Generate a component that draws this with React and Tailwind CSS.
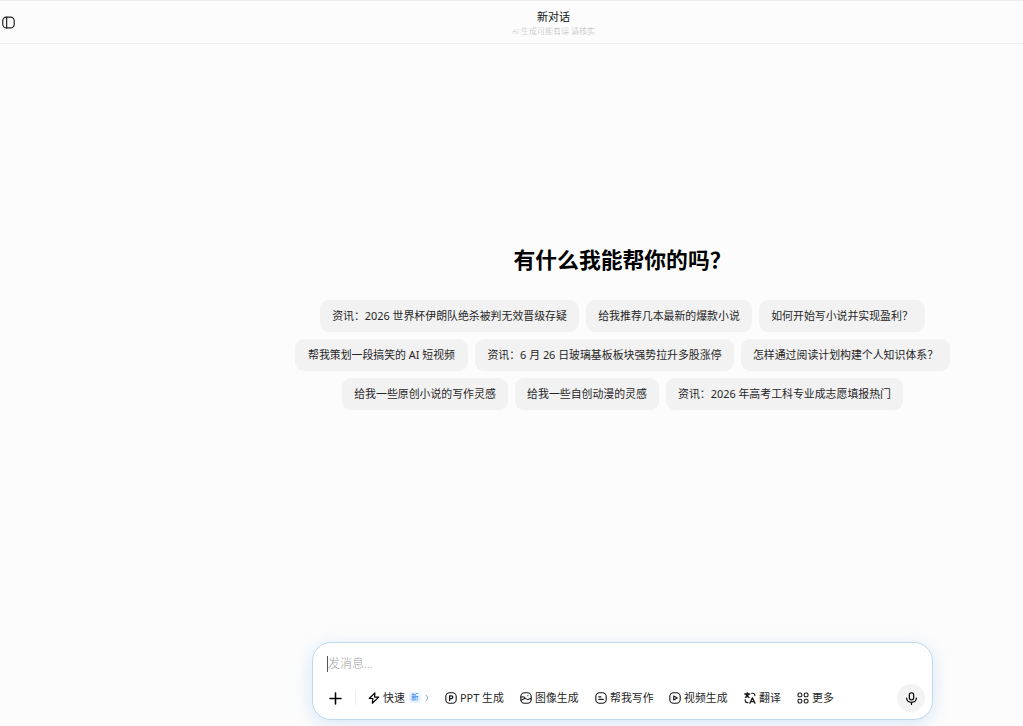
const rows = [
  [
    ['资讯：2026 世界杯伊朗队绝杀被判无效晋级存疑', 'w-[259px]'],
    ['给我推荐几本最新的爆款小说', 'w-[166px]'],
    ['如何开始写小说并实现盈利？', 'w-[166px]'],
  ],
  [
    ['帮我策划一段搞笑的 AI 短视频', 'w-[173px]'],
    ['资讯：6 月 26 日玻璃基板板块强势拉升多股涨停', 'w-[259px]'],
    ['怎样通过阅读计划构建个人知识体系？', 'w-[209px]'],
  ],
  [
    ['给我一些原创小说的写作灵感', 'w-[166px]'],
    ['给我一些自创动漫的灵感', 'w-[144px]'],
    ['资讯：2026 年高考工科专业成志愿填报热门', 'w-[237px]'],
  ],
];

function Icon({ children, className = 'size-3', stroke = 1.1 }) {
  return (
    <svg viewBox="0 0 12 12" className={`shrink-0 ${className}`} fill="none" stroke="currentColor" strokeWidth={stroke} strokeLinecap="round" strokeLinejoin="round">
      {children}
    </svg>
  );
}

const Frame = () => <rect x="0.8" y="0.8" width="10.4" height="10.4" rx="3.8" />;

const tools = [
  ['PPT 生成', 'w-[75px]', <><Frame /><path d="M4.6 8.4V3.9h1.8a1.35 1.35 0 0 1 0 2.7H4.6" strokeWidth="1.3" /></>],
  ['图像生成', 'w-[75px]', <><Frame /><path d="M1 5.2c1.6-.9 2.9-.6 4.2.8 1.1 1.2 2 1.8 3 1.5 1-.3 1.5-.9 2.8-.9M1.2 8.2l3.8-2M7.7 3.7h.3" /></>],
  ['帮我写作', 'w-[74px]', <><Frame /><path d="M3.8 4.9h2.1M3.8 7.4h4.4" /></>],
  ['视频生成', 'w-[75px]', <><Frame /><path d="M4.7 4v4l3.5-2z" /></>],
  ['翻译', 'w-[53px]', <><path d="M.8 2h5M3.3.7V2M1.3 5.4C3 4.8 4.2 3.6 4.6 2M1.8 2.3c.5 1.4 1.7 2.4 3.3 3M5.9 11.2l2.5-5.4 2.6 5.4M6.8 9.6h3.2" strokeWidth="1.3" /><path d="M7.7 1.2h1.1a2 2 0 0 1 2 2v.5M1.2 7.5v1.1a2 2 0 0 0 2 2h.8" /></>],
  ['更多', 'w-10', <><rect x="1" y="1" width="3.8" height="3.8" rx="1.4" /><rect x="7.2" y="1" width="3.8" height="3.8" rx="1.4" /><rect x="1" y="7.2" width="3.8" height="3.8" rx="1.4" /><rect x="7.2" y="7.2" width="3.8" height="3.8" rx="1.4" /></>],
];

export default function App() {
  return (
    <div className="flex h-[726px] w-[1023px] flex-col overflow-hidden bg-[#fcfcfc] font-['Noto_Sans','Noto_Sans_CJK_SC',sans-serif] text-[10.9px] text-[#262626]">
      <header className="flex h-11 shrink-0 items-center border-t border-b border-[#eeeeee]">
        <Icon className="ml-0.5 size-[13px] text-[#222]">
          <rect x="0.7" y="1" width="10.6" height="10" rx="3.4" />
          <path d="M4.3 1v10" />
        </Icon>
        <div className="ml-[69px] flex w-[939px] flex-col items-center pt-px">
          <h1 className="text-[11px] leading-[15px] text-[#111]">新对话</h1>
          <p className="text-[8px] leading-[13px] font-light text-[#b8b8b8]">
            <span className="font-['Open_Sans']">AI</span> 生成可能有误 请核实
          </p>
        </div>
      </header>

      <main className="ml-[222px] flex w-[801px] flex-1 flex-col items-center">
        <h2 className="mt-[200px] h-8 text-[21.8px] leading-8 font-bold text-black">有什么我能帮你的吗？</h2>
        <div className="mt-6 flex flex-col gap-[7px]">
          {rows.map((row, i) => (
            <div key={i} className="flex justify-center gap-[7px]">
              {row.map(([label, width]) => (
                <button key={label} className={`${width} h-8 rounded-[9px] bg-[#f2f2f2] text-center whitespace-nowrap`}>{label}</button>
              ))}
            </div>
          ))}
        </div>

        <section className="mt-auto mb-1.5 flex h-[78px] w-[621px] flex-col rounded-[19px] border border-[#bcd9ee] bg-white shadow-[0_4px_18px_rgba(60,145,225,0.2)]">
          <div className="mt-[13px] ml-3.5 flex h-4 items-center">
            <span className="h-4 w-px bg-[#555]" />
            <span className="text-[12px] font-light text-[#a0a0a0]">发消息...</span>
          </div>
          <div className="mt-3 ml-4 flex h-7 items-center">
            <Icon className="size-[13px] text-black" stroke={1.4}><path d="M6 .9v10.2M.9 6h10.2" /></Icon>
            <span className="ml-[13px] h-3.5 w-px bg-[#eeeeee]" />
            <button className="ml-3 flex w-[77px] items-center">
              <Icon className="size-3 text-black" stroke={1.2}><path d="M6.9.8 1.3 6.5h3.6l-.6 4.7 6.4-6.1H6.6z" /></Icon>
              <span className="ml-[3px]">快速</span>
              <span className="ml-1 flex h-[11px] w-3 items-center justify-center rounded-[3px] bg-[#e9f3ff] text-[7.5px] text-[#1977ef]">新</span>
              <svg viewBox="0 0 4 8" className="ml-1 h-2 w-1" fill="none" stroke="#7695ba" strokeWidth="0.8"><path d="M.8.8Q4.4 4 .8 7.2" /></svg>
            </button>
            {tools.map(([label, width, drawing]) => (
              <button key={label} className={`flex items-center gap-[3px] whitespace-nowrap ${width}`}>
                <Icon className="size-3 text-[#171717]">{drawing}</Icon>
                <span>{label}</span>
              </button>
            ))}
            <button className="mr-[7px] ml-auto flex size-7 items-center justify-center rounded-full bg-[#f3f3f3]">
              <Icon className="size-[13px] text-black"><rect x="4" y=".7" width="4" height="6.6" rx="2" /><path d="M1.5 5.7c.2 2.4 1.9 3.8 4.5 3.8s4.3-1.4 4.5-3.8M6 9.5v2" /></Icon>
            </button>
          </div>
        </section>
      </main>
    </div>
  );
}
